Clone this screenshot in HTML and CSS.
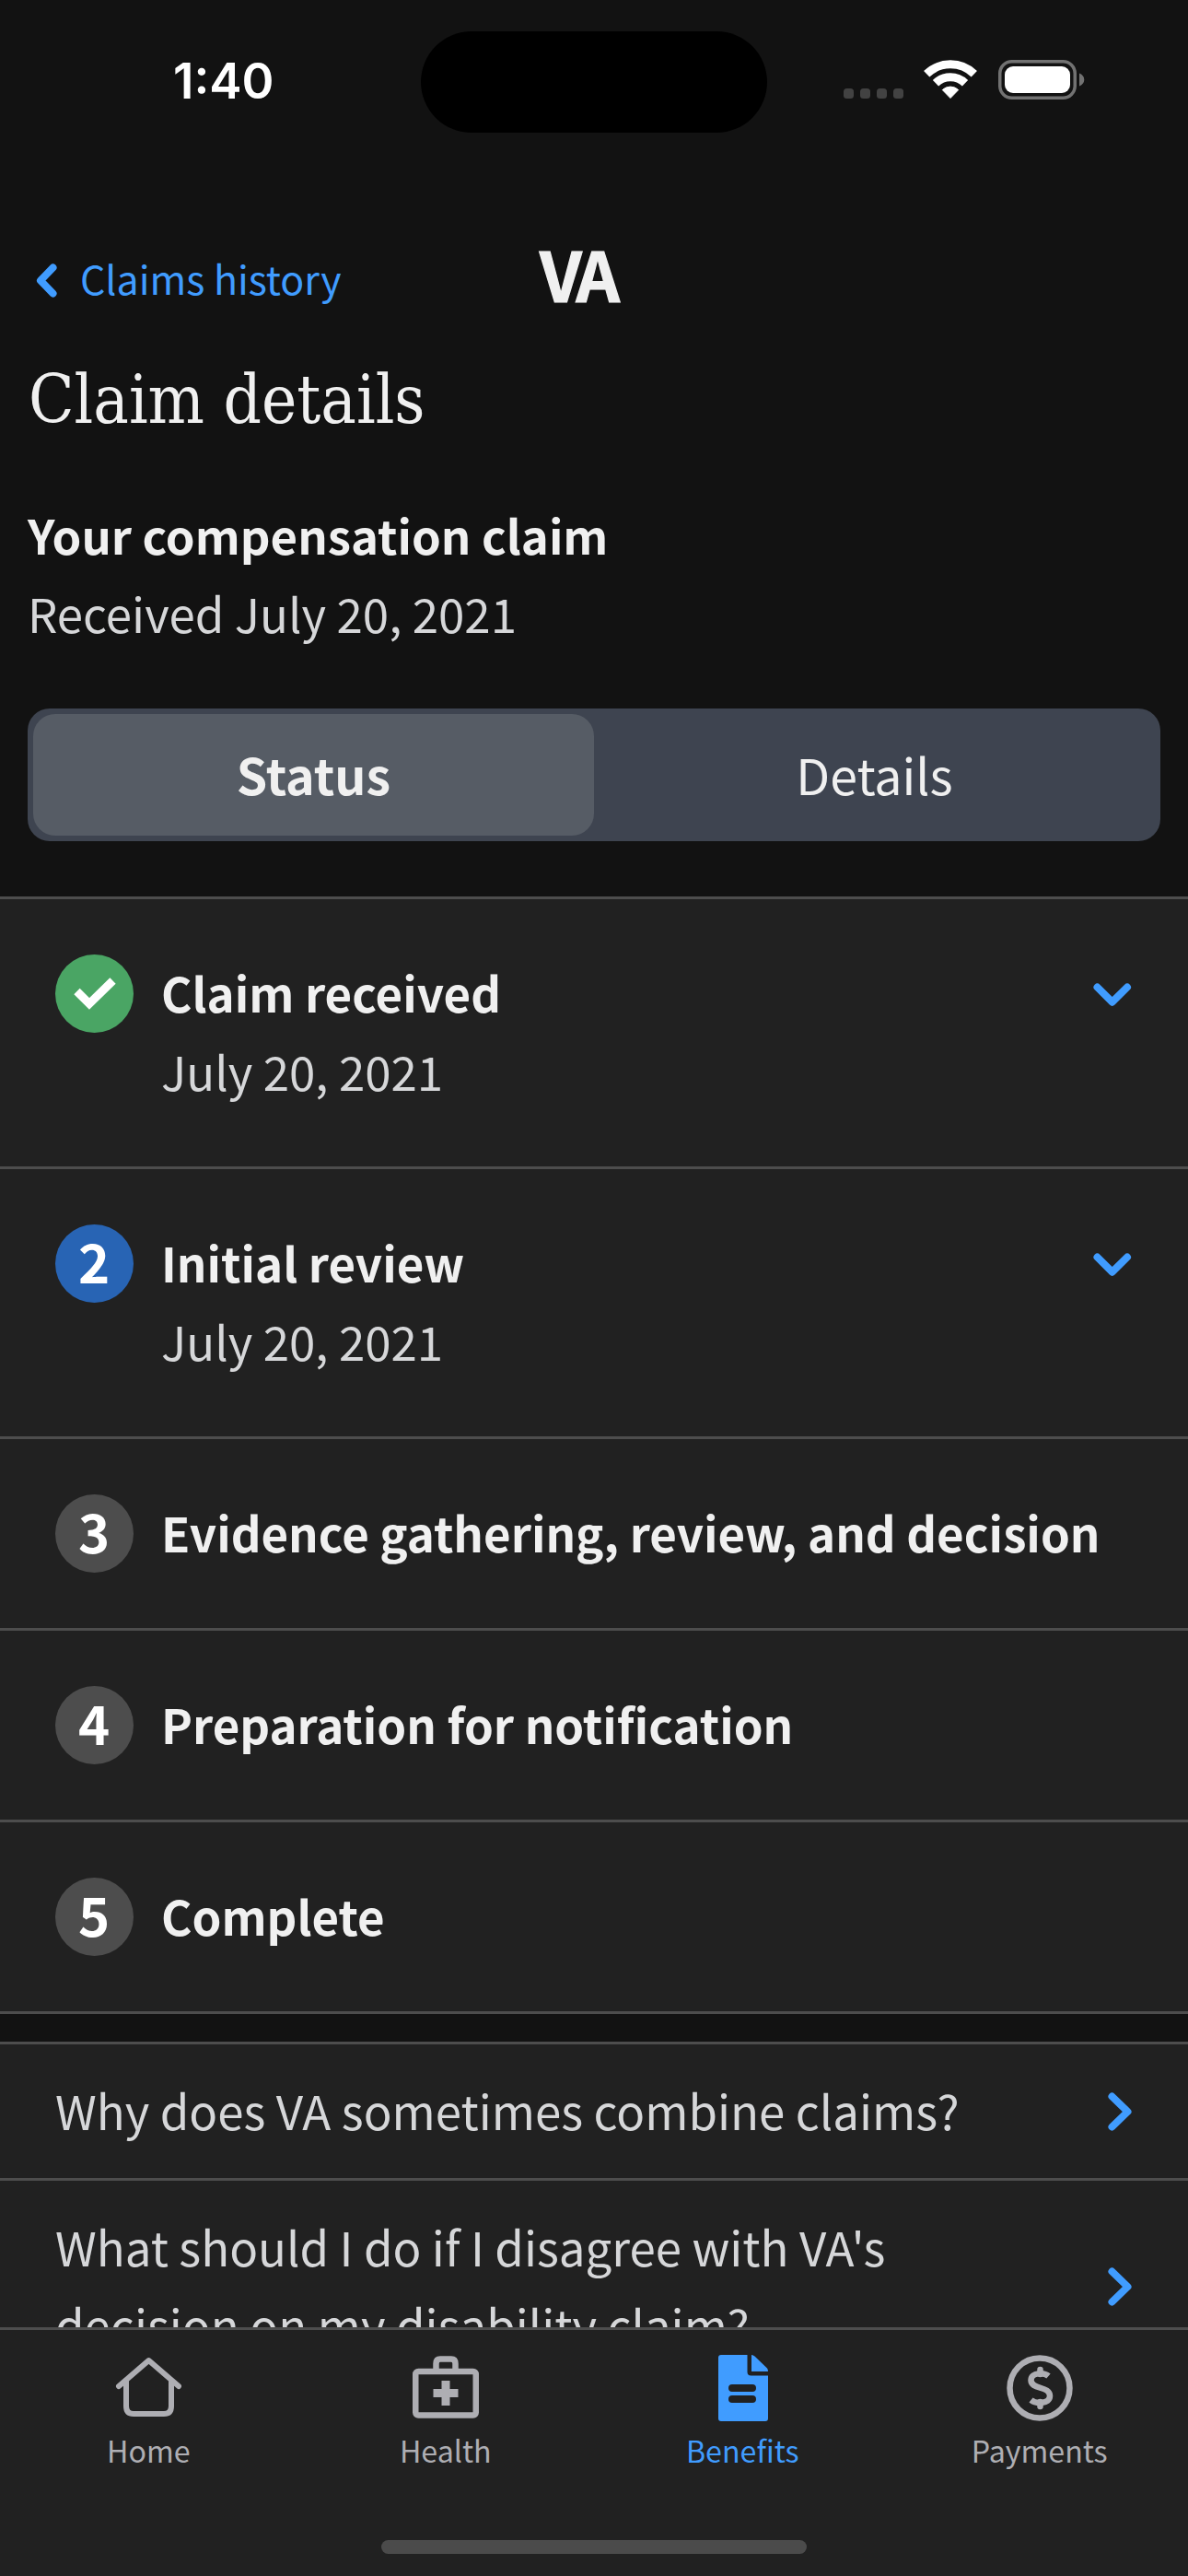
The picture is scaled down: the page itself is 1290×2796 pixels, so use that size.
FILE: index.html
```html
<!DOCTYPE html>
<html lang="en">
<head>
<meta charset="utf-8">
<title>Claim details</title>
<link rel="stylesheet" href="styles.css">
</head>
<body>
<div class="screen">
  <header class="status-bar">
    <div class="clock">1:40</div>
    <div class="island"></div>
    <div class="indicators">
      <svg class="cellular" width="65" height="11" viewBox="0 0 65 11" fill="#424242"><rect width="11" height="11" rx="3.5"/><rect x="18" width="11" height="11" rx="3.5"/><rect x="36" width="11" height="11" rx="3.5"/><rect x="54" width="11" height="11" rx="3.5"/></svg>
      <svg class="wifi" width="58" height="43" viewBox="0 0 58 43" fill="none" stroke="#fff"><path d="M3.2 15.3a37 37 0 0 1 51.6 0" stroke-width="9"/><path d="M13 25.2a23 23 0 0 1 32 0" stroke-width="9"/><path d="M20.3 32.6a12.5 12.5 0 0 1 17.4 0L29 41.5z" fill="#fff" stroke-width="1"/></svg>
      <svg class="battery" width="94" height="43" viewBox="0 0 94 43"><rect x="1.75" y="1.75" width="81.5" height="39.5" rx="13" fill="none" stroke="#727272" stroke-width="3.5"/><rect x="7" y="7" width="71" height="29" rx="9" fill="#fff"/><path d="M88 14.5c7 2.500 7 11.500 0 14z" fill="#727272"/></svg>
    </div>
  </header>

  <nav class="top-nav">
    <a class="back"><svg width="24" height="37" viewBox="0 0 24 37" fill="none" stroke="#409cff" stroke-width="8" stroke-linecap="round" stroke-linejoin="round"><path d="M19.500 4.500 6 18.500 19.500 32.500"/></svg><span>Claims history</span></a>
    <div class="brand">VA</div>
  </nav>

  <main class="content">
    <section class="summary">
      <h1 class="title">Claim details</h1>
      <h2 class="claim-name">Your compensation claim</h2>
      <p class="claim-date">Received July 20, 2021</p>
      <div class="segments">
        <div class="segment active">Status</div>
        <div class="segment">Details</div>
      </div>
    </section>

    <section class="list phases">
      <div class="phase dated">
        <div class="badge done"><svg width="46" height="36" viewBox="0 0 46 36" fill="none" stroke="#fff" stroke-width="9"><path d="M3.500 15 17 28.500 42.500 3.500"/></svg></div>
        <div class="phase-text"><h3>Claim received</h3><p>July 20, 2021</p></div>
        <svg class="chevron-down" width="42" height="26" viewBox="0 0 42 26" fill="none" stroke="#409cff" stroke-width="8" stroke-linecap="round" stroke-linejoin="round"><path d="M4.500 4.500 20.700 20.700 37 4.500"/></svg>
      </div>
      <div class="phase dated">
        <div class="badge current">2</div>
        <div class="phase-text"><h3>Initial review</h3><p>July 20, 2021</p></div>
        <svg class="chevron-down" width="42" height="26" viewBox="0 0 42 26" fill="none" stroke="#409cff" stroke-width="8" stroke-linecap="round" stroke-linejoin="round"><path d="M4.500 4.500 20.700 20.700 37 4.500"/></svg>
      </div>
      <div class="phase"><div class="badge">3</div><div class="phase-text"><h3>Evidence gathering, review, and decision</h3></div></div>
      <div class="phase"><div class="badge">4</div><div class="phase-text"><h3>Preparation for notification</h3></div></div>
      <div class="phase"><div class="badge">5</div><div class="phase-text"><h3>Complete</h3></div></div>
    </section>

    <section class="list links">
      <a class="link"><span>Why does VA sometimes combine claims?</span><svg width="27" height="42" viewBox="0 0 27 42" fill="none" stroke="#409cff" stroke-width="8" stroke-linecap="round" stroke-linejoin="round"><path d="M5.500 4.500 22.500 21 5.500 37.500"/></svg></a>
      <a class="link"><span>What should I do if I disagree with VA's<br>decision on my disability claim?</span><svg width="27" height="42" viewBox="0 0 27 42" fill="none" stroke="#409cff" stroke-width="8" stroke-linecap="round" stroke-linejoin="round"><path d="M5.500 4.500 22.500 21 5.500 37.500"/></svg></a>
    </section>
  </main>

  <footer class="tab-bar">
    <div class="tabs">
      <a class="tab"><svg width="72" height="72" viewBox="0 0 72 72" fill="none" stroke="#aeaeb3" stroke-width="6" stroke-linecap="round" stroke-linejoin="round"><path d="M4 34 36.500 6 69 34"/><path d="M12 29v26.500q0 8.500 8 8.500h33q8 0 8-8.500V29"/></svg><span>Home</span></a>
      <a class="tab"><svg width="72" height="72" viewBox="0 0 72 72" fill="none" stroke="#aeaeb3" stroke-width="6.500"><rect x="3.250" y="18" width="65.500" height="47.500" rx="3"/><path d="M25.500 17V9.500q0-5 4.500-5h12q4.500 0 4.500 5V17"/><path d="M36 28v27M22.500 41.500h27" stroke-width="9"/></svg><span>Health</span></a>
      <a class="tab selected"><svg width="72" height="72" viewBox="0 0 72 72" fill="#409cff"><path d="M13 0h28.500v18.500q0 4 4 4H64V69q0 3-3 3H13q-3 0-3-3V3q0-3 3-3z"/><path d="M46 0q2 0 3.500 1.500L63 14.500q1 1.300 1 3.500H46z"/><path d="M25 36h22M25 48h22" stroke="#212121" stroke-width="8" stroke-linecap="round"/></svg><span>Benefits</span></a>
      <a class="tab"><svg width="72" height="72" viewBox="0 0 72 72" fill="none" stroke="#aeaeb3" stroke-width="6.500"><circle cx="36" cy="36" r="32.500"/><path d="M45.500 23C41 19 26.500 18.500 26.500 27.500c0 10.500 20.500 6 20.500 17 0 9-15 9-20.500 4.500"/><path d="M36.500 16v5M36.500 51v5" stroke-linecap="round"/></svg><span>Payments</span></a>
    </div>
    <div class="home-indicator"></div>
  </footer>
</div>
</body>
</html>
```

FILE: styles.css
```css
* { box-sizing: border-box; }

body {
  margin: 0;
  background: #121212;
  color: #f0f0f0;
  font-family: "Noto Sans CJK SC", "Noto Sans", sans-serif;
}

h1, h2, h3, p { margin: 0; }
svg { display: block; flex: none; }

.screen {
  width: 1290px;
  height: 2796px;
  display: flex;
  flex-direction: column;
  overflow: hidden;
}

.status-bar {
  flex: none;
  height: 177px;
  padding-top: 34px;
  display: grid;
  grid-template-columns: 457px 376px 457px;
  align-items: start;
}
.clock {
  padding: 24px 0 0 188px;
  font: 600 53px/60px Inter, sans-serif;
  color: #fff;
}
.island { height: 110px; border-radius: 55px; background: #000; }
.indicators { display: flex; padding: 31px 0 0 83px; }
.cellular { margin-top: 31px; }
.wifi { margin-left: 22px; }
.battery { margin-left: 23px; }

.top-nav {
  flex: none;
  height: 177px;
  padding: 74px 0 0 38px;
  display: flex;
}
.back {
  width: 548px;
  display: flex;
  align-items: flex-start;
  color: #409cff;
  font-size: 42.9px;
  line-height: 60px;
}
.back svg { margin-top: 35px; }
.back span { margin: 20px 0 0 25px; }
.brand {
  font-size: 74px;
  font-weight: 700;
  line-height: 90px;
  letter-spacing: -5px;
  -webkit-text-stroke: 1.2px #f0f0f0;
}

.content {
  flex: 1;
  min-height: 0;
  overflow: hidden;
}
.summary { height: 619px; padding: 30px 30px 0; }
.title {
  font: 400 72px/100px "DejaVu Serif Condensed", "DejaVu Serif", serif;
  padding-left: 1px;
}
.claim-name {
  margin-top: 54px;
  font-size: 50.9px;
  line-height: 85px;
}
.claim-date {
  font-size: 51px;
  line-height: 85px;
  color: #d6d7d9;
}
.segments {
  height: 144px;
  margin-top: 61px;
  padding: 6px;
  display: grid;
  grid-template-columns: 1fr 1fr;
  border-radius: 24px;
  background: #3e4450;
}
.segment {
  border-radius: 24px;
  font-size: 53.7px;
  line-height: 130px;
  text-align: center;
}
.segment.active { background: #565c65; font-weight: 700; }

.list { background: #212121; border-top: 3px solid #4d4d4d; }
.phase {
  height: 208px;
  padding: 60px 61px 0 60px;
  display: flex;
  align-items: flex-start;
  border-bottom: 3px solid #4d4d4d;
}
.phase.dated { height: 293px; }
.badge {
  flex: none;
  width: 85px;
  height: 85px;
  border-radius: 50%;
  display: flex;
  align-items: center;
  justify-content: center;
  background: #4d4d4d;
  color: #fff;
  font: 700 58px/79px "Noto Sans CJK SC", sans-serif;
  padding: 0 1px 6px 0;
}
.badge.done { background: #4aa564; padding: 0; }
.badge.current { background: #2864b4; }
.phase-text { flex: 1; margin: -1px 0 0 30px; font-size: 51px; line-height: 85px; }
.phase-text h3 { font-size: inherit; white-space: nowrap; }
.phase-text p { color: #d6d7d9; }
.chevron-down { margin-top: 31px; }

.links { margin-top: 30px; }
.link {
  min-height: 148px;
  padding: 30px 61px 30px 60px;
  display: flex;
  align-items: center;
  justify-content: space-between;
  border-bottom: 3px solid #4d4d4d;
  color: #d6d7d9;
  font-size: 51px;
  line-height: 85px;
}
.link span { margin: -1px 0 1px; }

.tab-bar {
  flex: none;
  height: 270px;
  border-top: 3px solid #4d4d4d;
  background: #212121;
}
.tabs {
  height: 226px;
  padding-top: 27px;
  display: grid;
  grid-template-columns: repeat(4, 1fr);
}
.tab {
  display: flex;
  flex-direction: column;
  align-items: center;
  color: #aeaeb3;
  font-size: 32.2px;
  line-height: 48px;
}
.tab span { margin-top: 7px; }
.tab.selected { color: #409cff; }
.home-indicator {
  width: 462px;
  height: 15px;
  margin: 2px auto 0;
  border-radius: 8px;
  background: #4b4b4b;
}
```
